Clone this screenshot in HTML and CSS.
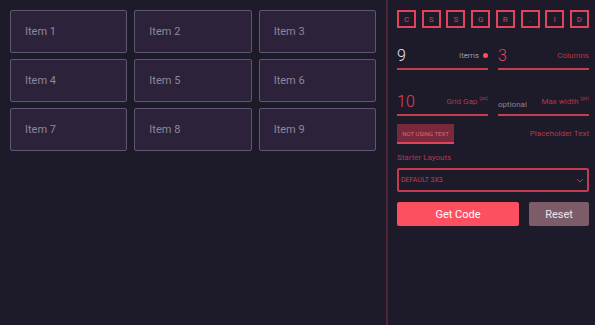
FILE: index.html
```html
<!DOCTYPE html>
<html lang="en">
<head>
    <meta charset="UTF-8">
    <title>CSS Grid Generator</title>
    <link rel="stylesheet" href="styles.css">
</head>
<body>
    <div class="grid-area">
        <div class="item">Item 1</div>
        <div class="item">Item 2</div>
        <div class="item">Item 3</div>
        <div class="item">Item 4</div>
        <div class="item">Item 5</div>
        <div class="item">Item 6</div>
        <div class="item">Item 7</div>
        <div class="item">Item 8</div>
        <div class="item">Item 9</div>
    </div>
    <div class="panel">
        <div class="logo">
            <span>C</span><span>S</span><span>S</span><span>G</span><span>R</span><span>.</span><span>I</span><span>D</span>
        </div>
        <div class="fields">
            <div class="field">
                <span class="value light">9</span>
                <span class="label light">Items <i class="dot"></i></span>
            </div>
            <div class="field">
                <span class="value">3</span>
                <span class="label">Columns</span>
            </div>
        </div>
        <div class="fields second">
            <div class="field">
                <span class="value">10</span>
                <span class="label">Grid Gap <sup>(px)</sup></span>
            </div>
            <div class="field">
                <span class="optional">optional</span>
                <span class="label">Max width <sup>(px)</sup></span>
            </div>
        </div>
        <div class="text-row">
            <button class="toggle">NOT USING TEXT</button>
            <span class="label">Placeholder Text</span>
        </div>
        <div class="starter">Starter Layouts</div>
        <div class="select">
            <span>DEFAULT 3X3</span>
            <svg width="8" height="5" viewBox="0 0 8 5"><path d="M1 1l3 3 3-3" fill="none" stroke="#b8394f" stroke-width="1"/></svg>
        </div>
        <div class="actions">
            <button class="btn primary">Get Code</button>
            <button class="btn secondary">Reset</button>
        </div>
    </div>
</body>
</html>
```
FILE: styles.css
```css
html, body {
    margin: 0;
    padding: 0;
    height: 100%;
    background: #1d1a2a;
    font-family: Roboto, 'Liberation Sans', sans-serif;
}
body {
    display: flex;
}
.grid-area {
    width: 366px;
    padding: 10px;
    display: grid;
    grid-template-columns: repeat(3, 1fr);
    grid-auto-rows: 43px;
    gap: 6px 7px;
    align-content: start;
}
.item {
    background: #2c2239;
    border: 1px solid #5f5771;
    border-radius: 2px;
    color: #8f879b;
    font-size: 11px;
    display: flex;
    align-items: center;
    padding-left: 14px;
}
.panel {
    width: 192px;
    border-left: 2px solid #4f2537;
    padding: 10px 6px 0 9px;
}
.logo {
    display: flex;
    justify-content: space-between;
}
.logo span {
    width: 15px;
    height: 14px;
    border: 2px solid #e0435a;
    color: #b83a50;
    font-size: 8px;
    font-weight: 500;
    display: flex;
    align-items: center;
    justify-content: center;
}
.fields {
    display: flex;
    gap: 10px;
    margin-top: 15px;
}
.fields.second {
    margin-top: 19px;
}
.field {
    flex: 1;
    display: flex;
    justify-content: space-between;
    align-items: center;
    border-bottom: 2px solid #c43e50;
    height: 24px;
    padding-bottom: 1px;
}
.value {
    font-size: 16px;
    font-weight: 300;
    color: #e0435a;
}
.value.light {
    color: #e8e4ee;
}
.label {
    font-size: 8px;
    color: #b0394f;
    display: flex;
    align-items: center;
}
.label.light {
    color: #c9c4d0;
    font-weight: 300;
}
.label sup {
    font-size: 5px;
    margin-left: 2px;
    align-self: flex-start;
    margin-top: -2px;
}
.dot {
    width: 5px;
    height: 5px;
    border-radius: 50%;
    background: #ff4d5e;
    margin-left: 4px;
}
.optional {
    font-size: 8px;
    color: #8a8494;
    padding-top: 6px;
}
.text-row {
    display: flex;
    justify-content: space-between;
    align-items: flex-start;
    margin-top: 8px;
}
.text-row .label {
    margin-top: 5px;
}
.toggle {
    background: #78293c;
    border: none;
    border-bottom: 2px solid #e0435a;
    color: #d46a7a;
    font-family: inherit;
    font-size: 6px;
    width: 57px;
    height: 20px;
    padding: 0;
}
.starter {
    font-size: 8px;
    color: #b0394f;
    margin-top: 9px;
}
.select {
    margin-top: 6px;
    height: 20px;
    border: 2px solid #c43a52;
    border-radius: 2px;
    display: flex;
    align-items: center;
    justify-content: space-between;
    padding: 0 3px 0 2px;
    font-size: 7px;
    color: #c23c52;
}
.actions {
    display: flex;
    gap: 10px;
    margin-top: 10px;
}
.btn {
    height: 24px;
    border: none;
    border-radius: 2px;
    font-family: inherit;
    font-size: 11px;
    color: #fff;
    padding: 0;
}
.primary {
    width: 122px;
    background: #fe4f60;
}
.secondary {
    flex: 1;
    background: #7c5c69;
    color: #ece6ea;
}
```
